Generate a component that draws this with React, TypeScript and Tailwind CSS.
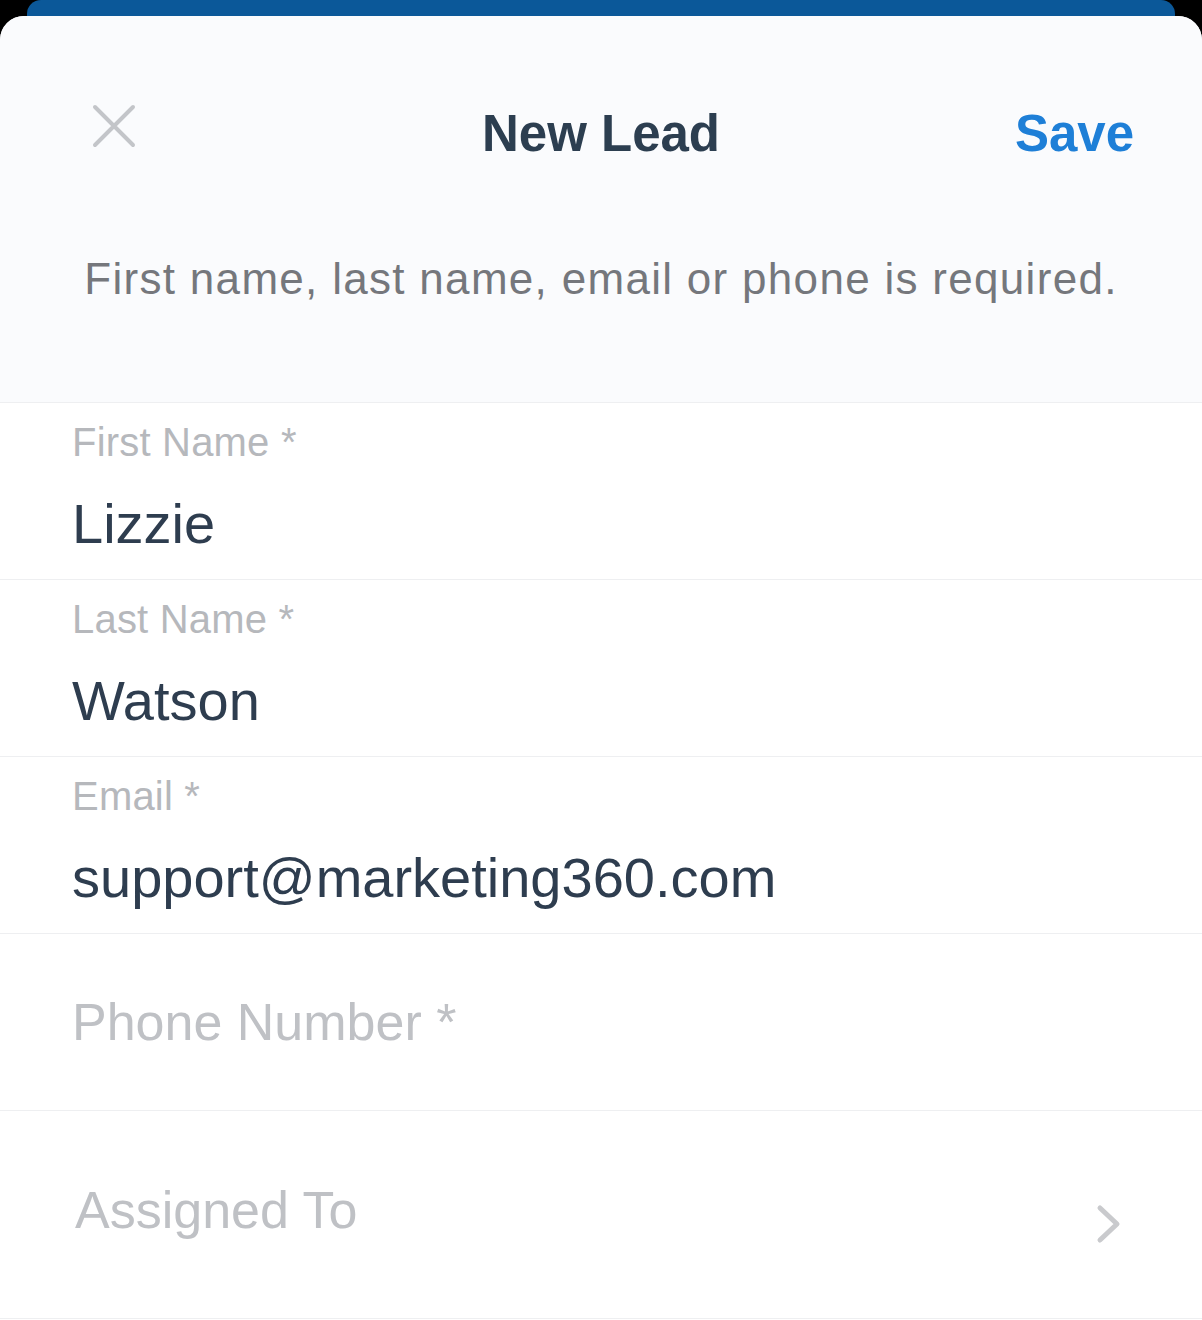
import React from "react";

const font = { fontFamily: '"Liberation Sans", Arial, sans-serif' };

function Field({ label, value }: { label: string; value: string }) {
  return (
    <div className="h-[177px] border-t border-[#eeeff1] bg-white px-[72px] pt-[19px]">
      <div className="text-[40px] leading-[40px] tracking-[0.2px] text-[#b6b8bc]">{label}</div>
      <div className="mt-[34px] text-[56px] leading-[56px] text-[#2e3d4f]">{value}</div>
    </div>
  );
}

export default function App() {
  return (
    <div className="flex h-[1320px] w-[1202px] flex-col overflow-hidden bg-black" style={font}>
      <div className="mx-[27px] h-[16px] shrink-0 rounded-t-[14px] bg-[#0b5899]" />
      <div className="flex-1 overflow-hidden rounded-t-[24px] bg-white">
        <div className="h-[386px] bg-[#fafbfd] pt-[84px]">
          <div className="relative flex h-[68px] items-center justify-between pl-[92px] pr-[68px]">
            <svg width="44" height="44" viewBox="0 0 44 44" className="-mt-[16px]">
              <path d="M3 3 L41 41 M41 3 L3 41" stroke="#c3c5c9" strokeWidth="4" strokeLinecap="round" />
            </svg>
            <div className="pointer-events-none absolute left-0 right-0 text-center text-[51px] font-bold leading-[68px] text-[#2c3e50]">
              New Lead
            </div>
            <div className="text-[51px] font-bold leading-[68px] text-[#1e7fd7]">Save</div>
          </div>
          <div className="mt-[86px] text-center text-[44px] leading-[50px] tracking-[1.3px] text-[#75777c]">
            First name, last name, email or phone is required.
          </div>
        </div>
        <Field label="First Name *" value="Lizzie" />
        <Field label="Last Name *" value="Watson" />
        <Field label="Email *" value="support@marketing360.com" />
        <div className="flex h-[177px] items-center border-t border-[#eeeff1] bg-white px-[72px]">
          <div className="text-[52px] leading-[56px] text-[#bfc1c5]">Phone Number *</div>
        </div>
        <div className="flex h-[209px] items-center justify-between border-t border-b border-[#eeeff1] bg-white pl-[75px] pr-[80px]">
          <div className="mb-[10px] text-[52px] leading-[56px] text-[#bfc1c5]">Assigned To</div>
          <svg width="26" height="40" viewBox="0 0 26 40" className="mt-[18px]">
            <path d="M4 4 L21 20 L4 36" stroke="#c9cacd" strokeWidth="5" fill="none" strokeLinecap="round" strokeLinejoin="round" />
          </svg>
        </div>
      </div>
    </div>
  );
}
